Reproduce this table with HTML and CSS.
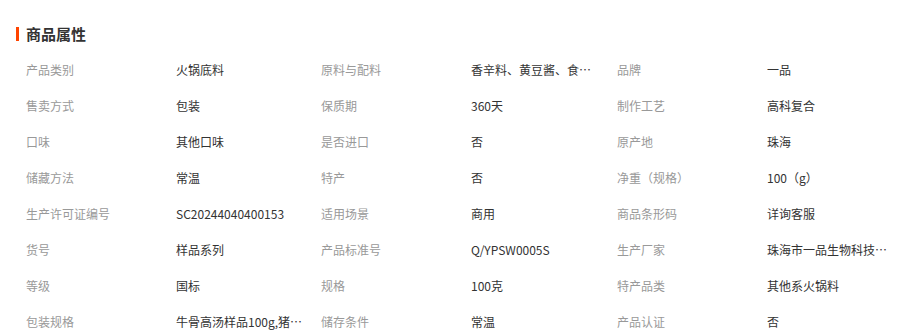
FILE: index.html
```html
<!DOCTYPE html>
<html lang="zh-CN">
<head>
<meta charset="utf-8">
<link rel="stylesheet" href="styles.css">
</head>
<body>
<section class="attrs">
  <h2 class="attrs-title"><span class="bar"></span>商品属性</h2>
  <div class="grid">
    <div class="k">产品类别</div><div class="v">火锅底料</div>
    <div class="k">原料与配料</div><div class="v">香辛料、黄豆酱、食用盐、白砂糖</div>
    <div class="k">品牌</div><div class="v">一品</div>

    <div class="k">售卖方式</div><div class="v">包装</div>
    <div class="k">保质期</div><div class="v">360天</div>
    <div class="k">制作工艺</div><div class="v">高科复合</div>

    <div class="k">口味</div><div class="v">其他口味</div>
    <div class="k">是否进口</div><div class="v">否</div>
    <div class="k">原产地</div><div class="v">珠海</div>

    <div class="k">储藏方法</div><div class="v">常温</div>
    <div class="k">特产</div><div class="v">否</div>
    <div class="k">净重（规格）</div><div class="v">100（g）</div>

    <div class="k">生产许可证编号</div><div class="v">SC20244040400153</div>
    <div class="k">适用场景</div><div class="v">商用</div>
    <div class="k">商品条形码</div><div class="v">详询客服</div>

    <div class="k">货号</div><div class="v">样品系列</div>
    <div class="k">产品标准号</div><div class="v">Q/YPSW0005S</div>
    <div class="k">生产厂家</div><div class="v">珠海市一品生物科技有限公司</div>

    <div class="k">等级</div><div class="v">国标</div>
    <div class="k">规格</div><div class="v">100克</div>
    <div class="k">特产品类</div><div class="v">其他系火锅料</div>

    <div class="k">包装规格</div><div class="v">牛骨高汤样品100g,猪骨高汤样品100g</div>
    <div class="k">储存条件</div><div class="v">常温</div>
    <div class="k">产品认证</div><div class="v">否</div>
  </div>
</section>
</body>
</html>
```

FILE: styles.css
```css
html, body {
  margin: 0;
  padding: 0;
  background: #fff;
}
body {
  font-family: "Noto Sans CJK SC", "Noto Sans", "Liberation Sans", sans-serif;
  font-size: 12px;
  color: #333;
  overflow: hidden;
}
.attrs {
  padding: 24px 0 0 16px;
}
.attrs-title {
  margin: 0;
  display: flex;
  align-items: center;
  gap: 7px;
  height: 20px;
  font-size: 15px;
  font-weight: bold;
  color: #333;
  line-height: 20px;
}
.bar {
  display: block;
  width: 3px;
  height: 14px;
  background: #ff4400;
}
.grid {
  margin-top: 8px;
  padding-left: 10px;
  display: grid;
  grid-template-columns: 150px 145px 150px 146px 150px 150px;
  grid-auto-rows: 36px;
}
.k, .v {
  line-height: 36px;
  white-space: nowrap;
  overflow: hidden;
  text-overflow: ellipsis;
}
.k {
  color: #999;
}
.v {
  color: #333;
  max-width: 130px;
}
```
